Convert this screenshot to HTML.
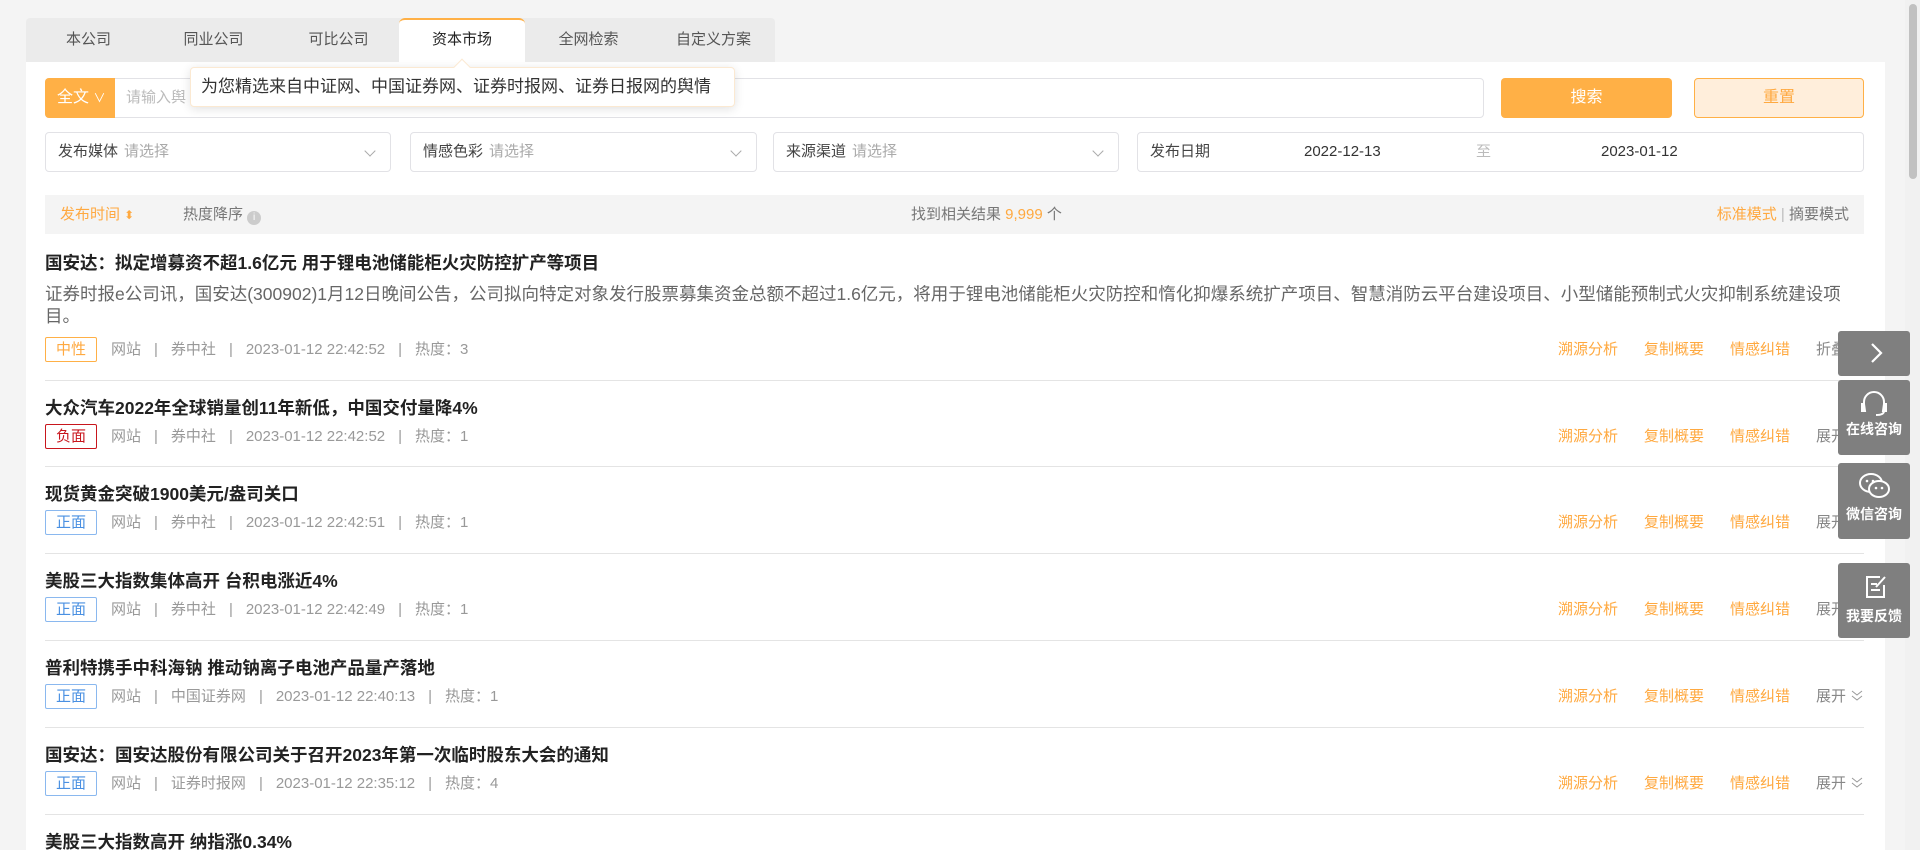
<!DOCTYPE html>
<html><head><meta charset="utf-8"><style>
*{box-sizing:border-box;margin:0;padding:0}
html,body{width:1920px;height:850px;overflow:hidden}
body{background:#f4f4f4;font-family:"Liberation Sans","Noto Sans CJK SC",sans-serif;position:relative;color:#333}
.abs{position:absolute}
.panel{left:26px;top:62px;width:1859px;height:788px;background:#fff}
.tabs{left:26px;top:18px;width:749px;height:44px;background:#ebebeb;border-radius:4px 4px 0 0}
.tab{position:absolute;top:0;width:125px;height:44px;line-height:44px;text-align:center;font-size:15px;color:#555}
.tab.on{background:#fff;color:#222;border-top:2px solid #ffb046;border-radius:6px 6px 0 0;line-height:40px}
.tip{left:190px;top:67px;width:545px;height:40px;background:#fff;border:1px solid #fbe9d2;border-radius:4px;box-shadow:0 2px 10px rgba(0,0,0,.12);font-size:17px;line-height:38px;padding-left:10px;color:#333;z-index:5}
.tipa{left:456px;top:61px;width:12px;height:12px;background:#fff;transform:rotate(45deg);border-left:1px solid #fbe9d2;border-top:1px solid #fbe9d2;z-index:6}
.box{border:1px solid #e2e2e6;border-radius:4px;background:#fff;height:40px}
.sel{font-size:15px;line-height:38px;padding-left:12px;color:#444}
.sel i{font-style:normal;color:#aaa;margin-left:6px}
.chev{position:absolute;right:16px;top:14px;width:8px;height:8px;border-right:1px solid #aaa;border-bottom:1px solid #aaa;transform:rotate(45deg)}
.btn{height:40px;border-radius:4px;text-align:center;line-height:40px;font-size:16px}
.sort{left:45px;top:195px;width:1819px;height:39px;background:#f4f4f4;font-size:15px;line-height:39px;color:#777}
.item{position:absolute;left:45px;width:1819px;border-bottom:1px solid #e4e4e4}
.t{font-size:17.5px;line-height:20px;font-weight:bold;color:#222;white-space:nowrap}
.sum{font-size:17.5px;color:#666;line-height:22px;width:1819px}
.meta{position:absolute;left:0;font-size:15px;color:#999;white-space:nowrap;height:26px;line-height:26px}
.tag{display:inline-block;width:52px;height:25px;line-height:23px;text-align:center;border:1px solid;border-radius:2px;font-size:15px;margin-right:14px}
.meta span.s{margin:0 13px}
.acts{position:absolute;right:0;font-size:15px;white-space:nowrap;height:26px;line-height:26px}
.acts b{font-weight:normal;color:#ffa940;margin-right:26px}
.acts em{font-style:normal;color:#888}
.acts svg{vertical-align:-1px;margin-left:4px}
.fb{position:absolute;left:1838px;width:72px;background:#7f7f7f;border-radius:3px;color:#fff;text-align:center;font-size:14px;font-weight:bold;z-index:9}
</style></head><body>
<div class="abs panel"></div>
<div class="abs tabs">
<div class="tab" style="left:0">本公司</div>
<div class="tab" style="left:125px">同业公司</div>
<div class="tab" style="left:250px">可比公司</div>
<div class="tab on" style="left:373px;width:126px">资本市场</div>
<div class="tab" style="left:500px">全网检索</div>
<div class="tab" style="left:625px">自定义方案</div>
</div>
<div class="abs tipa"></div>
<div class="abs tip">为您精选来自中证网、中国证券网、证券时报网、证券日报网的舆情</div>

<div class="abs box" style="left:45px;top:78px;width:1439px"></div>
<div class="abs" style="left:45px;top:78px;width:70px;height:40px;background:#ffb046;border-radius:4px 0 0 4px;color:#fff;font-size:16px;line-height:40px;padding-left:12px">全文 <span style="font-size:12px">∨</span></div>
<div class="abs" style="left:126px;top:78px;line-height:40px;font-size:15px;color:#bbb">请输入舆</div>
<div class="abs btn" style="left:1501px;top:78px;width:171px;background:#ffb046;color:#fff">搜索</div>
<div class="abs btn" style="left:1694px;top:78px;width:170px;background:#ffeedb;border:1px solid #ffb046;color:#ffa940;line-height:38px">重置</div>

<div class="abs box sel" style="left:45px;top:132px;width:346px">发布媒体<i>请选择</i><span class="chev"></span></div>
<div class="abs box sel" style="left:410px;top:132px;width:347px">情感色彩<i>请选择</i><span class="chev"></span></div>
<div class="abs box sel" style="left:773px;top:132px;width:346px">来源渠道<i>请选择</i><span class="chev"></span></div>
<div class="abs box sel" style="left:1137px;top:132px;width:727px">发布日期
<span style="position:absolute;left:166px;color:#333">2022-12-13</span>
<span style="position:absolute;left:338px;color:#bbb">至</span>
<span style="position:absolute;left:463px;color:#333">2023-01-12</span></div>

<div class="abs sort">
<span style="position:absolute;left:15px;color:#ffa940">发布时间 <span style="font-size:12px">⬍</span></span>
<span style="position:absolute;left:138px">热度降序 <span style="display:inline-block;width:14px;height:14px;border-radius:50%;background:#ccc;color:#fff;font-size:10px;line-height:14px;text-align:center;vertical-align:-1px">i</span></span>
<span style="position:absolute;left:866px">找到相关结果 <span style="color:#ffa940">9,999</span> 个</span>
<span style="position:absolute;right:15px"><span style="color:#ffa940">标准模式</span> <span style="color:#bbb">|</span> 摘要模式</span>
</div>

<div class="item" style="top:250px;height:131px">
<div class="t" style="margin-top:3px">国安达：拟定增募资不超1.6亿元 用于锂电池储能柜火灾防控扩产等项目</div>
<div class="sum" style="margin-top:10px">证券时报e公司讯，国安达(300902)1月12日晚间公告，公司拟向特定对象发行股票募集资金总额不超过1.6亿元，将用于锂电池储能柜火灾防控和惰化抑爆系统扩产项目、智慧消防云平台建设项目、小型储能预制式火灾抑制系统建设项目。</div>
<div class="meta" style="top:87px"><span class="tag" style="color:#ffa940;border-color:#ffb046">中性</span>网站<span class="s">|</span>券中社<span class="s">|</span>2023-01-12 22:42:52<span class="s">|</span>热度：3</div>
<div class="acts" style="top:87px"><b>溯源分析</b><b>复制概要</b><b>情感纠错</b><em>折叠</em><svg width="14" height="12"><path d="M2 6l5-4 5 4M2 11l5-4 5 4" stroke="#999" fill="none"/></svg></div>
</div>

<div class="item" style="top:381px;height:86px"><div class="t" style="margin-top:17px">大众汽车2022年全球销量创11年新低，中国交付量降4%</div>
<div class="meta" style="top:43px"><span class="tag" style="color:#c8161d;border-color:#c8161d">负面</span>网站<span class="s">|</span>券中社<span class="s">|</span>2023-01-12 22:42:52<span class="s">|</span>热度：1</div>
<div class="acts" style="top:43px"><b>溯源分析</b><b>复制概要</b><b>情感纠错</b><em>展开</em><svg width="14" height="12"><path d="M2 1l5 4 5-4M2 6l5 4 5-4" stroke="#999" fill="none"/></svg></div></div>

<div class="item" style="top:467px;height:87px"><div class="t" style="margin-top:17px">现货黄金突破1900美元/盎司关口</div>
<div class="meta" style="top:43px"><span class="tag" style="color:#4a90e2;border-color:#8ab8ef">正面</span>网站<span class="s">|</span>券中社<span class="s">|</span>2023-01-12 22:42:51<span class="s">|</span>热度：1</div>
<div class="acts" style="top:43px"><b>溯源分析</b><b>复制概要</b><b>情感纠错</b><em>展开</em><svg width="14" height="12"><path d="M2 1l5 4 5-4M2 6l5 4 5-4" stroke="#999" fill="none"/></svg></div></div>

<div class="item" style="top:554px;height:87px"><div class="t" style="margin-top:17px">美股三大指数集体高开 台积电涨近4%</div>
<div class="meta" style="top:43px"><span class="tag" style="color:#4a90e2;border-color:#8ab8ef">正面</span>网站<span class="s">|</span>券中社<span class="s">|</span>2023-01-12 22:42:49<span class="s">|</span>热度：1</div>
<div class="acts" style="top:43px"><b>溯源分析</b><b>复制概要</b><b>情感纠错</b><em>展开</em><svg width="14" height="12"><path d="M2 1l5 4 5-4M2 6l5 4 5-4" stroke="#999" fill="none"/></svg></div></div>

<div class="item" style="top:641px;height:87px"><div class="t" style="margin-top:17px">普利特携手中科海钠 推动钠离子电池产品量产落地</div>
<div class="meta" style="top:43px"><span class="tag" style="color:#4a90e2;border-color:#8ab8ef">正面</span>网站<span class="s">|</span>中国证券网<span class="s">|</span>2023-01-12 22:40:13<span class="s">|</span>热度：1</div>
<div class="acts" style="top:43px"><b>溯源分析</b><b>复制概要</b><b>情感纠错</b><em>展开</em><svg width="14" height="12"><path d="M2 1l5 4 5-4M2 6l5 4 5-4" stroke="#999" fill="none"/></svg></div></div>

<div class="item" style="top:728px;height:87px"><div class="t" style="margin-top:17px">国安达：国安达股份有限公司关于召开2023年第一次临时股东大会的通知</div>
<div class="meta" style="top:43px"><span class="tag" style="color:#4a90e2;border-color:#8ab8ef">正面</span>网站<span class="s">|</span>证券时报网<span class="s">|</span>2023-01-12 22:35:12<span class="s">|</span>热度：4</div>
<div class="acts" style="top:43px"><b>溯源分析</b><b>复制概要</b><b>情感纠错</b><em>展开</em><svg width="14" height="12"><path d="M2 1l5 4 5-4M2 6l5 4 5-4" stroke="#999" fill="none"/></svg></div></div>

<div class="item" style="top:815px;height:35px;border:none"><div class="t" style="margin-top:17px">美股三大指数高开 纳指涨0.34%</div></div>

<div class="fb" style="top:331px;height:45px"><svg width="72" height="45"><path d="M34 13l9 9-9 9" stroke="#fff" stroke-width="2.2" fill="none"/></svg></div>
<div class="fb" style="top:380px;height:75px"><svg width="72" height="40"><path d="M26 30v-8a10 10 0 0 1 20 0v8M26 24h-2v7h3zM46 24h2v7h-3zM46 31q0 4-8 4" stroke="#fff" stroke-width="2" fill="none"/></svg><div style="margin-top:-4px">在线咨询</div></div>
<div class="fb" style="top:463px;height:76px"><svg width="72" height="42"><ellipse cx="33" cy="20" rx="11" ry="9" stroke="#fff" stroke-width="2" fill="#7f7f7f"/><ellipse cx="41" cy="26" rx="10" ry="8" stroke="#fff" stroke-width="2" fill="#7f7f7f"/><circle cx="29" cy="18" r="1.3" fill="#fff"/><circle cx="35" cy="18" r="1.3" fill="#fff"/><circle cx="38" cy="25" r="1.3" fill="#fff"/><circle cx="44" cy="25" r="1.3" fill="#fff"/></svg><div style="margin-top:-4px">微信咨询</div></div>
<div class="fb" style="top:563px;height:75px"><svg width="72" height="42"><path d="M42 14h-13v20h17v-12M33 21h6M33 27h9M38 24l9-10" stroke="#fff" stroke-width="2" fill="none"/></svg><div style="margin-top:-2px">我要反馈</div></div>

<div class="abs" style="left:1905px;top:0;width:15px;height:850px;background:#f1f1f1"></div>
<div class="abs" style="left:1909px;top:4px;width:8px;height:175px;background:#c1c1c1;border-radius:4px"></div>
</body></html>
